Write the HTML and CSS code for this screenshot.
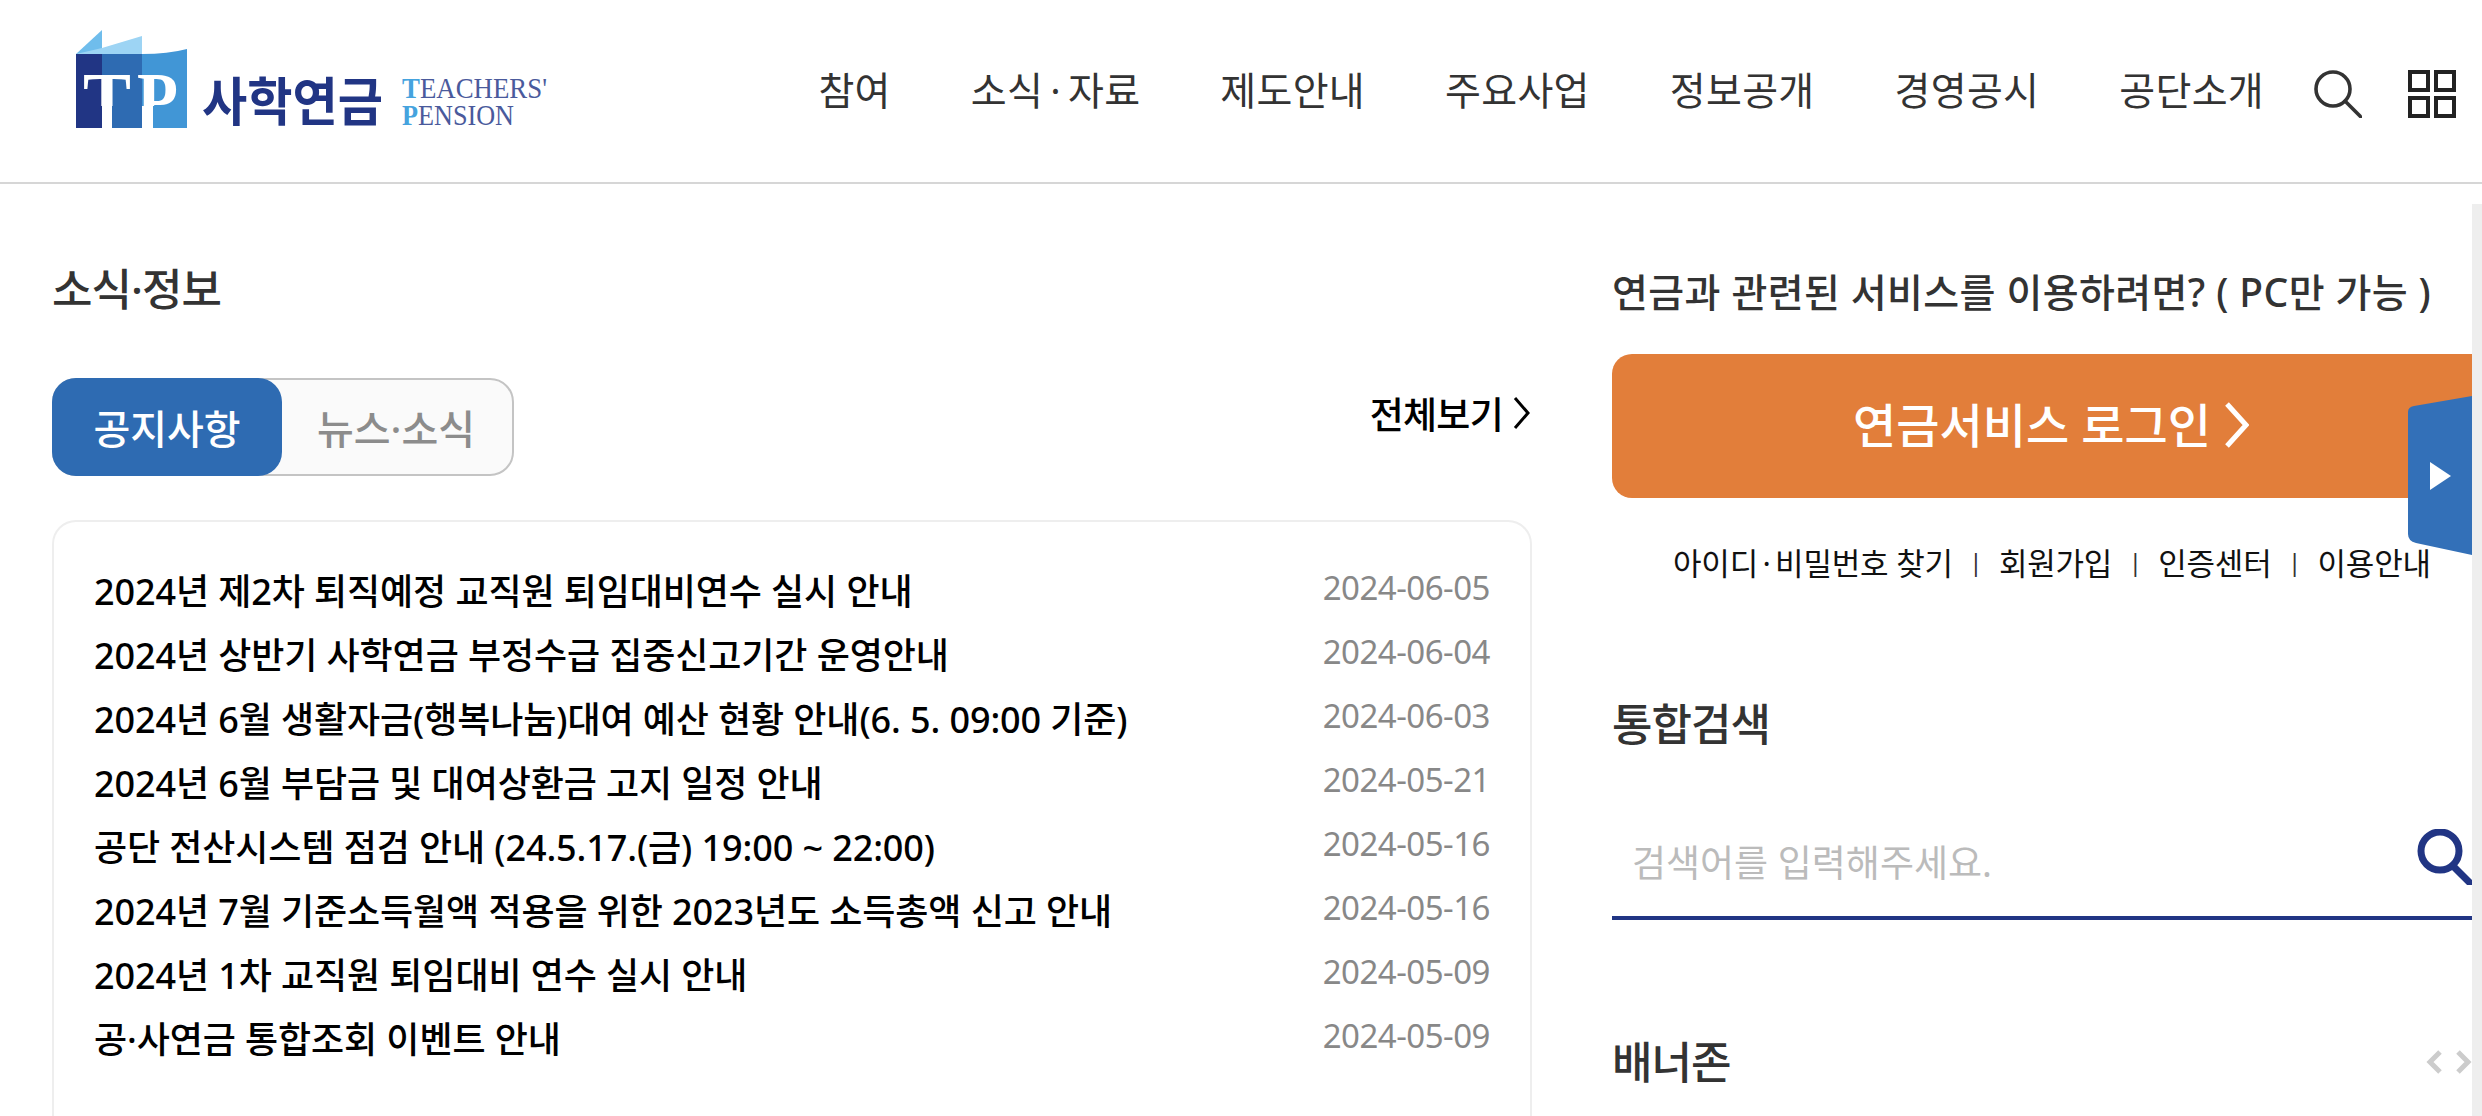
FILE: index.html
```html
<!DOCTYPE html>
<html lang="ko">
<head>
<meta charset="utf-8">
<title>사학연금</title>
<link rel="stylesheet" href="styles.css">
</head>
<body>
<header class="header">
  <a class="logo">
    <svg viewBox="62 25 560 110" width="560" height="110">
      <polygon points="76,54 102,30 102,54" fill="#6fbdec"/>
      <polygon points="76,54 102,48 142,36 142,54" fill="#9dd4f4"/>
      <path d="M142 54 Q168 54 187 49 V127 H142Z" fill="#4196d6"/>
      <path d="M102 54 H142 V127 H102Z" fill="#2e6bb2"/>
      <path d="M76 54 H102 V127 H76Z" fill="#213584"/>
      <text class="logo-tp" x="83" y="125" textLength="48" lengthAdjust="spacingAndGlyphs">T</text>
      <text class="logo-tp" x="137" y="125" textLength="41" lengthAdjust="spacingAndGlyphs">P</text>
      <rect x="76" y="106" width="26" height="22" fill="#213584"/>
      <rect x="102" y="106" width="10" height="22" fill="#fff"/>
      <rect x="112" y="106" width="30" height="22" fill="#2e6bb2"/>
      <rect x="142" y="106" width="11" height="22" fill="#fff"/>
      <rect x="153" y="106" width="34" height="22" fill="#4196d6"/>
      <text class="logo-name" x="202" y="121" textLength="181" lengthAdjust="spacingAndGlyphs">사학연금</text>
      <text class="logo-en" x="402" y="98" textLength="145" lengthAdjust="spacingAndGlyphs"><tspan class="logo-init">T</tspan>EACHERS'</text>
      <text class="logo-en" x="402" y="125" textLength="112" lengthAdjust="spacingAndGlyphs"><tspan class="logo-init">P</tspan>ENSION</text>
    </svg>
  </a>
  <nav class="nav">
    <a>참여</a><a>소식<span class="dot">·</span>자료</a><a>제도안내</a><a>주요사업</a><a>정보공개</a><a>경영공시</a><a>공단소개</a>
  </nav>
  <svg class="icon-search" viewBox="0 0 48 48" width="48" height="48" fill="none" stroke="#333" stroke-width="3.6">
    <circle cx="19" cy="19" r="17"/><path d="M31 31 L47 47" stroke-linecap="round"/>
  </svg>
  <svg class="icon-grid" viewBox="0 0 48 48" width="48" height="48" fill="none" stroke="#222" stroke-width="4">
    <rect x="2" y="2" width="18" height="18"/><rect x="28" y="2" width="18" height="18"/>
    <rect x="2" y="28" width="18" height="18"/><rect x="28" y="28" width="18" height="18"/>
  </svg>
</header>
<div class="page">
  <main class="content">
    <section class="left">
      <h2 class="title">소식·정보</h2>
      <div class="tabs-row">
        <div class="tabs"><span class="tab on">공지사항</span><span class="tab">뉴스·소식</span></div>
        <a class="more">전체보기<svg viewBox="0 0 18 34" width="18" height="34" fill="none" stroke="#000" stroke-width="3"><path d="M2 2 L15 17 L2 32"/></svg></a>
      </div>
      <ul class="card">
        <li><a>2024년 제2차 퇴직예정 교직원 퇴임대비연수 실시 안내</a><time>2024-06-05</time></li>
        <li><a>2024년 상반기 사학연금 부정수급 집중신고기간 운영안내</a><time>2024-06-04</time></li>
        <li><a>2024년 6월 생활자금(행복나눔)대여 예산 현황 안내(6. 5. 09:00 기준)</a><time>2024-06-03</time></li>
        <li><a>2024년 6월 부담금 및 대여상환금 고지 일정 안내</a><time>2024-05-21</time></li>
        <li><a>공단 전산시스템 점검 안내 (24.5.17.(금) 19:00 ~ 22:00)</a><time>2024-05-16</time></li>
        <li><a>2024년 7월 기준소득월액 적용을 위한 2023년도 소득총액 신고 안내</a><time>2024-05-16</time></li>
        <li><a>2024년 1차 교직원 퇴임대비 연수 실시 안내</a><time>2024-05-09</time></li>
        <li><a>공·사연금 통합조회 이벤트 안내</a><time>2024-05-09</time></li>
      </ul>
    </section>
    <aside class="right">
      <p class="svc">연금과 관련된 서비스를 이용하려면? ( PC만 가능 )</p>
      <a class="login">연금서비스 로그인<svg viewBox="0 0 24 48" width="24" height="48" fill="none" stroke="#fff" stroke-width="5"><path d="M2 3 L21 24 L2 45"/></svg></a>
      <div class="links"><a>아이디<span class="dot-s">·</span>비밀번호 찾기</a><i>|</i><a>회원가입</a><i>|</i><a>인증센터</a><i>|</i><a>이용안내</a></div>
      <h2 class="title search-title">통합검색</h2>
      <div class="search">
        <span class="placeholder">검색어를 입력해주세요.</span>
        <svg viewBox="0 0 56 56" width="56" height="56" fill="none" stroke="#213584" stroke-width="7"><circle cx="24" cy="22" r="19"/><path d="M38 38 L56 56"/></svg>
      </div>
      <div class="banner-head">
        <h2 class="title">배너존</h2>
        <span class="arrows">
          <svg viewBox="0 0 16 24" width="16" height="24" fill="none" stroke="#ccc" stroke-width="5"><path d="M14 2 L4 12 L14 22"/></svg>
          <svg viewBox="0 0 16 24" width="16" height="24" fill="none" stroke="#ccc" stroke-width="5"><path d="M2 2 L12 12 L2 22"/></svg>
        </span>
      </div>
    </aside>
    <svg class="side-tab" viewBox="0 0 64 160" width="64" height="160">
      <path d="M6 10 L64 0 V159 L8 147 Q0 145 0 138 V16 Q0 11 6 10Z" fill="#3370b8"/>
      <polygon points="22,66 43,80 22,94" fill="#fff"/>
    </svg>
  </main>
  <div class="track"></div>
</div>
</body>
</html>
```
FILE: styles.css
```css
* { box-sizing: border-box; }
html, body { margin: 0; height: 100%; overflow: hidden; background: #fff; }
body {
  display: flex;
  flex-direction: column;
  font-family: "Noto Sans", "Noto Sans CJK KR", sans-serif;
  color: #222;
}
h2, p, ul { margin: 0; padding: 0; }
li { list-style: none; }

.header {
  flex: none;
  height: 184px;
  border-bottom: 2px solid #d6d6d6;
  display: flex;
  align-items: center;
  padding: 0 26px 0 62px;
}
.logo { display: flex; flex: none; margin-bottom: 22px; }
.logo svg { display: block; }
.logo-tp { font: bold 76px "Liberation Serif", serif; fill: #fff; }
.logo-name { font-size: 52px; font-weight: 700; fill: #213584; }
.logo-en { font: 30px "Liberation Serif", serif; fill: #4a5a9c; }
.logo-init { font-weight: bold; fill: #45a3de; }

.nav { display: flex; gap: 80px; margin-left: auto; margin-bottom: 4px; font-size: 39px; color: #333; letter-spacing: .3px; line-height: 1; }
.dot { margin: 0 7px; }
.icon-search { flex: none; margin-left: 50px; margin-top: 6px; }
.icon-grid { flex: none; margin-left: 46px; margin-top: 6px; }

.page { flex: 1; min-height: 0; display: flex; }
.content {
  flex: 1; min-width: 0;
  position: relative;
  display: flex;
  overflow: hidden;
  padding: 75px 0 0 52px;
  gap: 80px;
}
.track { flex: none; width: 10px; margin-top: 20px; background: #eee; }

.title { font-size: 44px; font-weight: 500; color: #333; line-height: 60px; letter-spacing: -1px; }

.left { flex: none; width: 1480px; }
.tabs-row { display: flex; justify-content: space-between; margin-top: 59px; }
.tabs { display: flex; width: 462px; height: 98px; border: 2px solid #c4c4c4; border-radius: 24px; background: #fafafa; margin-bottom: 44px; position: relative; }
.tab { flex: 1; display: flex; align-items: center; justify-content: center; font-size: 40px; font-weight: 500; color: #8c8c8c; padding-right: 2px; }
.tab.on { flex: none; width: 230px; margin: -2px 0 -2px -2px; background: #2e6bb2; color: #fff; border-radius: 24px; padding: 0; }
.more { display: flex; align-items: center; gap: 10px; height: 70px; margin-right: 1px; font-size: 37px; font-weight: 500; color: #000; letter-spacing: -.7px; }

.card { border: 2px solid #eee; border-bottom: 0; border-radius: 24px 24px 0 0; height: 700px; padding: 35px 40px 0 40px; }
.card li { display: flex; justify-content: space-between; align-items: center; height: 64px; font-size: 36px; color: #000; letter-spacing: -.1px; }
.card a { font-weight: 500; }
.card time { font-size: 33px; color: #888; letter-spacing: -.5px; margin-top: -3px; }

.right { flex: none; width: 900px; }
.svc { font-size: 39px; font-weight: 500; color: #333; line-height: 60px; letter-spacing: .4px; margin-top: 3px; }
.login {
  display: flex; align-items: center; justify-content: center; gap: 14px;
  width: 900px; height: 144px; margin-top: 32px;
  background: #e27e3a; border-radius: 20px 0 0 20px;
  padding: 0 22px 2px 0;
  font-size: 47px; font-weight: 500; color: #fff; line-height: 1;
}
.links { display: flex; align-items: center; font-size: 31px; color: #111; height: 50px; margin-top: 38px; margin-left: 61px; letter-spacing: -.2px; }
.dot-s { margin: 0 4.500px; }
.links i { font-style: normal; color: #333; margin: 0 16.500px; font-size: 24px; }
.search-title { margin-top: 108px; }
.search {
  position: relative;
  display: flex; justify-content: space-between; align-items: center;
  width: 860px; height: 122px; margin-top: 44px;
  border-bottom: 4px solid #213584;
}
.search svg { flex: none; }
.placeholder { font-size: 37px; color: #bbb; padding-left: 20px; margin-top: 8px; }
.banner-head { display: flex; justify-content: space-between; align-items: center; width: 860px; margin-top: 112px; }
.arrows { display: flex; gap: 14px; }

.side-tab { position: absolute; right: 0; top: 212px; }
```
